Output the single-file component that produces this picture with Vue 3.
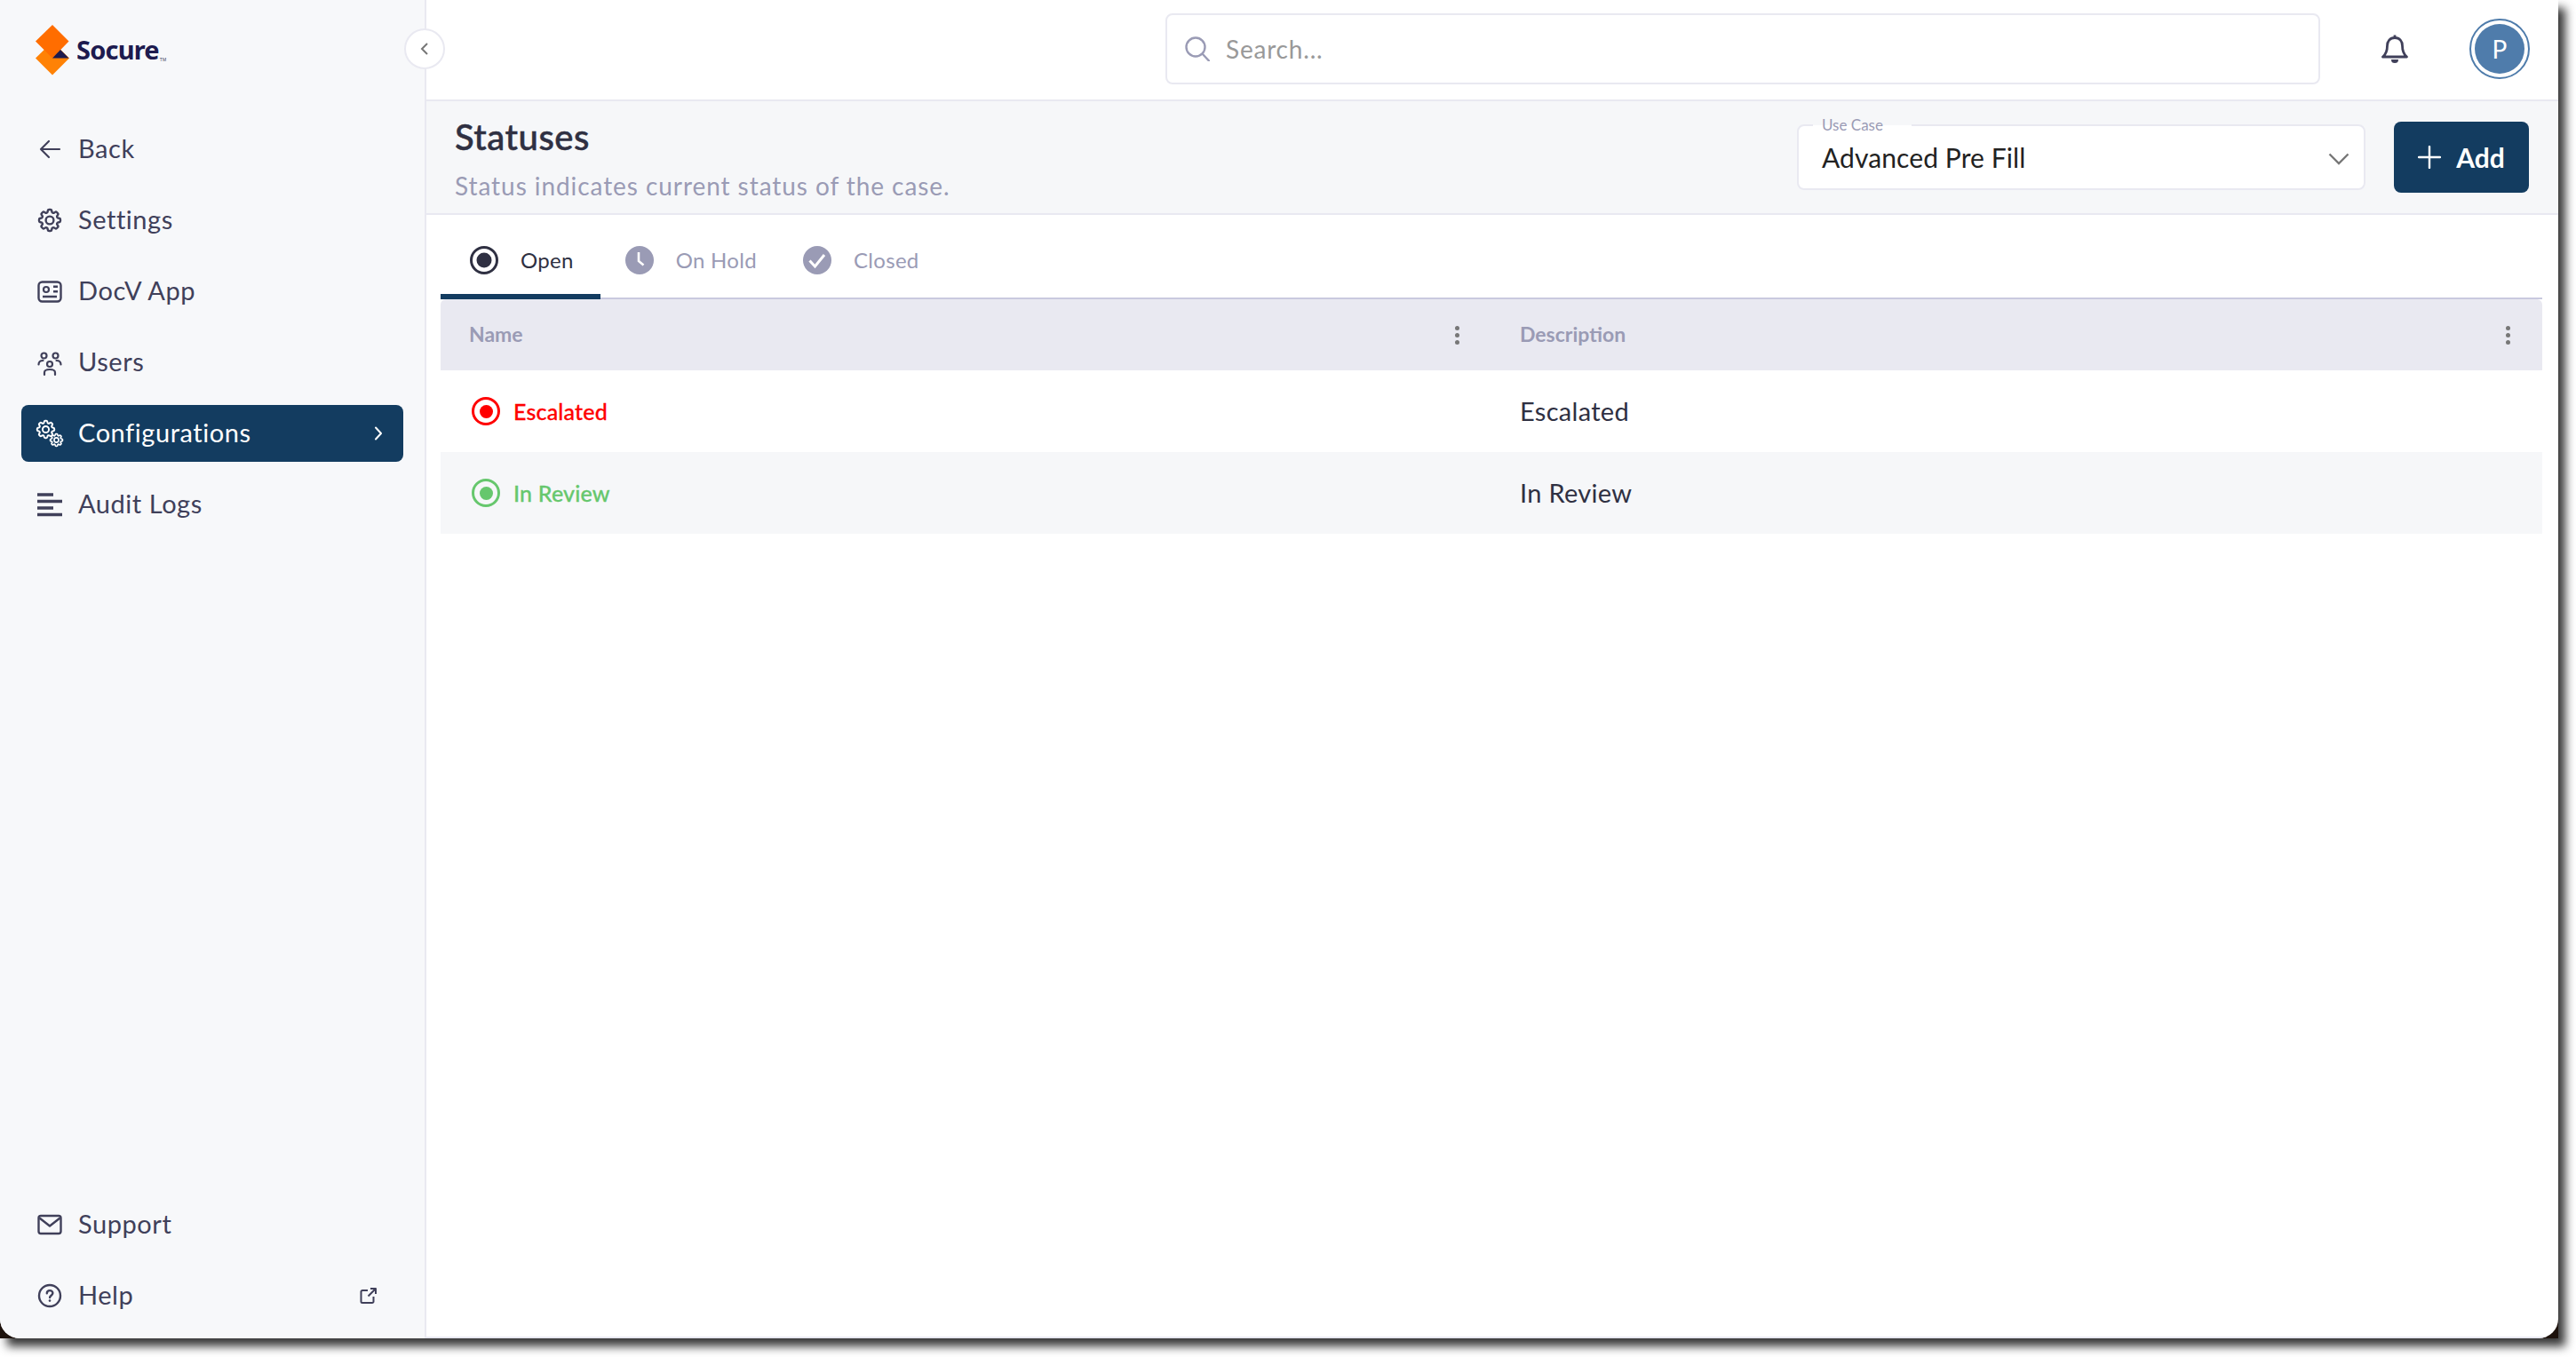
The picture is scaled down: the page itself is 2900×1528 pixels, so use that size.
<script setup>
import { ref } from "vue";

const mainNav = [
  { label: "Back", icon: "back" },
  { label: "Settings", icon: "gear" },
  { label: "DocV App", icon: "card" },
  { label: "Users", icon: "users" },
  { label: "Configurations", icon: "gears", active: true },
  { label: "Audit Logs", icon: "logs" },
];

const activeTab = ref("Open");
const tabs = ["Open", "On Hold", "Closed"];

const rows = [
  { name: "Escalated", description: "Escalated", tone: "red" },
  { name: "In Review", description: "In Review", tone: "green" },
];

const gearPath =
  "M10.343 3.94c.09-.542.56-.94 1.11-.94h1.093c.55 0 1.02.398 1.11.94l.149.894c.07.424.384.764.78.93.398.164.855.142 1.205-.108l.737-.527a1.125 1.125 0 0 1 1.45.12l.773.774c.39.389.44 1.002.12 1.45l-.527.737c-.25.35-.272.806-.107 1.204.165.397.505.71.93.78l.893.15c.543.09.94.559.94 1.109v1.094c0 .55-.397 1.02-.94 1.11l-.894.149c-.424.07-.764.383-.929.78-.165.398-.143.854.107 1.204l.527.738c.32.447.269 1.06-.12 1.45l-.774.773a1.125 1.125 0 0 1-1.449.12l-.738-.527c-.35-.25-.806-.272-1.203-.107-.398.165-.71.505-.781.929l-.149.894c-.09.542-.56.94-1.11.94h-1.094c-.55 0-1.019-.398-1.11-.94l-.148-.894c-.071-.424-.384-.764-.781-.93-.398-.164-.854-.142-1.204.108l-.738.527c-.447.32-1.06.269-1.45-.12l-.773-.774a1.125 1.125 0 0 1-.12-1.45l.527-.737c.25-.35.272-.806.108-1.204-.165-.397-.506-.71-.93-.78l-.894-.15c-.542-.09-.94-.56-.94-1.109v-1.094c0-.55.398-1.02.94-1.11l.894-.149c.424-.07.765-.383.93-.78.165-.398.143-.854-.108-1.204l-.526-.738a1.125 1.125 0 0 1 .12-1.45l.773-.773a1.125 1.125 0 0 1 1.45-.12l.737.527c.35.25.807.272 1.204.107.397-.165.71-.505.78-.929l.15-.894Z";
</script>

<template>
  <div class="page">
    <div class="window">
      <div class="app">
        <aside class="sidebar">
          <div class="logo">
            <svg class="logo-mark" viewBox="0 0 38 57" width="38" height="57">
              <path d="M19 19 38 37.5 19 56.5 0 37.5z" fill="#ff8205" />
              <path d="M19 0 37.5 18.5 19 37.5 0 18.5z" fill="#ff6d00" />
              <path d="M28 28 37.5 37.5H19z" fill="#1d1b4f" />
            </svg>
            <span class="logo-text">Socure</span>
            <span class="logo-tm">TM</span>
          </div>

          <nav class="nav">
            <a
              v-for="item in mainNav"
              :key="item.label"
              class="nav-item"
              :class="{ active: item.active }"
            >
              <svg class="nav-icon" viewBox="0 0 28 28" fill="none" stroke="currentColor" stroke-width="2.2">
                <template v-if="item.icon === 'back'">
                  <path d="M25 14H4M13 5l-9 9 9 9" stroke-linecap="round" stroke-linejoin="round" />
                </template>
                <g v-else-if="item.icon === 'gear'" transform="translate(14 14) scale(1.33) translate(-12 -12)" stroke-width="1.8">
                  <path :d="gearPath" />
                  <circle cx="12" cy="12" r="3.300" />
                </g>
                <template v-else-if="item.icon === 'card'">
                  <rect x="1.500" y="3.500" width="25" height="22" rx="4" stroke-width="2.400" />
                  <circle cx="10" cy="12" r="3" />
                  <path d="M18 8.700h5M18 14.300h5M6 20h16" stroke-width="2.400" />
                </template>
                <template v-else-if="item.icon === 'users'">
                  <circle cx="7.500" cy="6.500" r="3" />
                  <circle cx="20.500" cy="6.500" r="3" />
                  <circle cx="14" cy="16" r="3" />
                  <path d="M1.500 16.500c0-3 1.500-4.500 5-4.500M26.500 16.500c0-3-1.500-4.500-5-4.500M8 28v-2.500c0-2.500 2-3.500 6-3.500s6 1 6 3.500V28" stroke-linecap="round" />
                </template>
                <template v-else-if="item.icon === 'gears'">
                  <g transform="translate(9.500 9.500) scale(1.08) translate(-12 -12)" stroke-width="1.800">
                    <path :d="gearPath" />
                    <circle cx="12" cy="12" r="3.300" />
                  </g>
                  <g transform="translate(21.500 21.500) scale(.77) translate(-12 -12)" stroke-width="2.200">
                    <path :d="gearPath" />
                    <circle cx="12" cy="12" r="3.300" />
                  </g>
                </template>
                <template v-else>
                  <path d="M0 3h18M0 10.500h28M0 18h18M0 25.500h28" stroke-width="3.600" />
                </template>
              </svg>
              <span class="nav-label">{{ item.label }}</span>
              <svg v-if="item.active" class="nav-arrow" viewBox="0 0 12 16" fill="none" stroke="currentColor" stroke-width="2">
                <path d="M3 1.500l6 6.500-6 6.500" stroke-linecap="round" stroke-linejoin="round" />
              </svg>
            </a>
          </nav>

          <nav class="nav nav-bottom">
            <a class="nav-item">
              <svg class="nav-icon" viewBox="0 0 28 28" fill="none" stroke="currentColor" stroke-width="2.400">
                <rect x="1.500" y="4" width="25" height="20" rx="2.500" />
                <path d="M2.500 6.500 14 15.500 25.500 6.500" stroke-linejoin="round" />
              </svg>
              <span class="nav-label">Support</span>
            </a>
            <a class="nav-item">
              <svg class="nav-icon" viewBox="0 0 28 28" fill="none" stroke="currentColor" stroke-width="2.400">
                <circle cx="14" cy="14" r="12" />
                <path d="M10.800 11.300c0-4.200 6.600-4.200 6.600-.2 0 2.600-3.300 2.600-3.300 5" stroke-linecap="round" />
                <circle cx="14" cy="19.600" r="1.300" fill="currentColor" stroke="none" />
              </svg>
              <span class="nav-label">Help</span>
              <svg class="nav-external" viewBox="0 0 20 20" fill="none" stroke="currentColor" stroke-width="2">
                <path d="M9 4H3a1.500 1.500 0 0 0-1.500 1.500v11A1.500 1.500 0 0 0 3 18h11a1.500 1.500 0 0 0 1.500-1.500V11M9.500 10.500 18 2M12 2h6v6" stroke-linejoin="round" />
              </svg>
            </a>
          </nav>

          <button class="collapse-btn">
            <svg viewBox="0 0 12 16" width="12" height="16" fill="none" stroke="#777" stroke-width="2">
              <path d="M9 2 3 8l6 6" />
            </svg>
          </button>
        </aside>

        <div class="content">
          <header class="topbar">
            <div class="search">
              <svg class="search-icon" viewBox="0 0 28 28" width="28" height="28" fill="none" stroke="#9a9bb5" stroke-width="2.400">
                <circle cx="12" cy="12" r="10.500" />
                <path d="M20 20l7 7.500" stroke-linecap="round" />
              </svg>
              <span class="search-text">Search...</span>
            </div>
            <svg class="bell" viewBox="0 0 30 34" width="30" height="34" fill="none" stroke="#40405a" stroke-width="2.800">
              <path d="M15 1.500v3M15 4.500c-5.500 0-8.500 4-8.500 9 0 7-2 10-5 12.500h27c-3-2.500-5-5.500-5-12.500 0-5-3-9-8.500-9z" stroke-linejoin="round" />
              <path d="M11 29h8c0 3-1.500 4-4 4s-4-1-4-4z" fill="#40405a" stroke="none" />
            </svg>
            <div class="avatar"><span class="avatar-inner">P</span></div>
          </header>

          <section class="subheader">
            <div class="heading">
              <h1 class="title">Statuses</h1>
              <p class="subtitle">Status indicates current status of the case.</p>
            </div>
            <div class="select">
              <span class="select-label">Use Case</span>
              <span class="select-value">Advanced Pre Fill</span>
              <svg class="select-arrow" viewBox="0 0 24 14" width="24" height="14" fill="none" stroke="#777" stroke-width="2.400">
                <path d="M1.500 1.500 12 12 22.500 1.500" />
              </svg>
            </div>
            <button class="add-btn">
              <svg viewBox="0 0 26 26" width="26" height="26" stroke="#fff" stroke-width="2.400">
                <path d="M13 1v24M1 13h24" stroke-linecap="round" />
              </svg>
              <span>Add</span>
            </button>
          </section>

          <section class="panel">
            <div class="tabs">
              <button
                v-for="tab in tabs"
                :key="tab"
                class="tab"
                :class="{ active: activeTab === tab }"
                @click="activeTab = tab"
              >
                <svg class="tab-icon" viewBox="0 0 32 32" width="32" height="32">
                  <template v-if="tab === 'Open'">
                    <circle cx="16" cy="16" r="14.500" fill="none" stroke="#2f3042" stroke-width="3" />
                    <circle cx="16" cy="16" r="8.500" fill="#2f3042" />
                  </template>
                  <template v-else-if="tab === 'On Hold'">
                    <circle cx="16" cy="16" r="16" fill="#9a9bb5" />
                    <path d="M15 7v10l5.500 4.500" fill="none" stroke="#fff" stroke-width="2.600" />
                  </template>
                  <template v-else>
                    <circle cx="16" cy="16" r="16" fill="#9a9bb5" />
                    <path d="M7.500 16.500 13.500 23 24 10" fill="none" stroke="#fff" stroke-width="3" />
                  </template>
                </svg>
                <span>{{ tab }}</span>
              </button>
            </div>

            <div class="table">
              <div class="table-head">
                <div class="cell">
                  <span>Name</span>
                  <span class="kebab"><i></i><i></i><i></i></span>
                </div>
                <div class="cell">
                  <span>Description</span>
                  <span class="kebab"><i></i><i></i><i></i></span>
                </div>
              </div>
              <div v-for="row in rows" :key="row.name" class="table-row">
                <div class="cell status" :class="row.tone">
                  <span class="status-dot"><i></i></span>
                  <span class="status-name">{{ row.name }}</span>
                </div>
                <div class="cell desc"><span>{{ row.description }}</span></div>
              </div>
            </div>
          </section>
        </div>
      </div>
    </div>
  </div>
</template>

<style scoped>
.page {
  width: 2900px;
  height: 1528px;
  overflow: hidden;
  background: #fff;
}
.window {
  width: 2880px;
  height: 1507px;
  background: #1d120c;
  box-shadow: 8px 9px 10px rgba(0, 0, 0, 0.78);
  font-family: Lato, "Noto Sans", sans-serif;
  color: #40405a;
}
.app {
  height: 100%;
  display: flex;
  background: #fff;
  border-radius: 0 0 22px 22px;
  overflow: hidden;
}

.sidebar {
  position: relative;
  width: 480px;
  flex: none;
  box-sizing: border-box;
  display: flex;
  flex-direction: column;
  background: #f7f8fa;
  border-right: 2px solid #e9e9f1;
  padding: 28px 24px 16px;
  z-index: 1;
}
.logo {
  display: flex;
  align-items: center;
  height: 57px;
  padding-left: 16px;
}
.logo-mark {
  flex: none;
}
.logo-text {
  margin-left: 8px;
  padding-bottom: 3px;
  font-family: "Noto Sans", sans-serif;
  font-size: 29px;
  font-weight: 700;
  letter-spacing: -0.8px;
  color: #1d1b4f;
}
.logo-tm {
  font-family: "Liberation Sans", sans-serif;
  font-size: 5px;
  margin: 20px 0 0 1px;
  color: #40405a;
}

.nav {
  display: flex;
  flex-direction: column;
  gap: 16px;
  margin-top: 51px;
}
.nav-bottom {
  margin-top: auto;
}
.nav-item {
  display: flex;
  align-items: center;
  height: 64px;
  padding: 0 26px 0 18px;
  border-radius: 8px;
  font-size: 29px;
  color: #40405a;
}
.nav-item.active {
  background: #133c60;
  color: #fff;
}
.nav-icon {
  width: 28px;
  height: 28px;
  flex: none;
  overflow: visible;
}
.nav-label {
  margin-left: 18px;
  padding-bottom: 3px;
  flex: 1;
  letter-spacing: 0.55px;
}
.nav-arrow {
  width: 12px;
  height: 16px;
  margin-right: -4px;
}
.nav-external {
  width: 20px;
  height: 20px;
  margin-right: 3px;
}
.collapse-btn {
  position: absolute;
  top: 32px;
  right: -23px;
  width: 46px;
  height: 46px;
  padding: 0;
  display: flex;
  align-items: center;
  justify-content: center;
  background: #fff;
  border: 2px solid #e9e9f1;
  border-radius: 50%;
}

.content {
  flex: 1;
  min-width: 0;
  display: flex;
  flex-direction: column;
  box-sizing: border-box;
  border-bottom: 2px solid #e9e9f1;
}
.topbar {
  height: 114px;
  flex: none;
  box-sizing: border-box;
  display: flex;
  align-items: center;
  border-bottom: 2px solid #e9e9f1;
  padding: 0 32px 2px 832px;
}
.search {
  width: 1300px;
  height: 80px;
  box-sizing: border-box;
  display: flex;
  align-items: center;
  gap: 18px;
  padding: 0 20px;
  border: 2px solid #e9e9f1;
  border-radius: 8px;
}
.search-text {
  font-size: 28px;
  color: #999;
  letter-spacing: 0.8px;
}
.bell {
  margin-left: 69px;
}
.avatar {
  margin-left: 69px;
  width: 68px;
  height: 68px;
  box-sizing: border-box;
  border: 2px solid #4f7cab;
  border-radius: 50%;
  padding: 4px;
}
.avatar-inner {
  display: flex;
  align-items: center;
  justify-content: center;
  height: 100%;
  border-radius: 50%;
  background: #4f7cab;
  color: #fff;
  font-size: 28px;
}

.subheader {
  height: 128px;
  flex: none;
  box-sizing: border-box;
  display: flex;
  align-items: center;
  background: #f6f7f9;
  border-bottom: 2px solid #e9e9f1;
  padding: 0 33px 0 32px;
}
.heading {
  flex: 1;
  padding-top: 2px;
}
.title {
  margin: 0;
  font-size: 40px;
  font-weight: 500;
  letter-spacing: 0.5px;
  -webkit-text-stroke: 0.5px #2f3042;
  color: #2f3042;
  line-height: 46px;
}
.subtitle {
  margin: 15px 0 0;
  font-size: 28px;
  color: #9a9bb5;
  line-height: 34px;
  letter-spacing: 0.93px;
}
.select {
  position: relative;
  width: 640px;
  height: 74px;
  box-sizing: border-box;
  display: flex;
  align-items: center;
  justify-content: space-between;
  padding: 0 16px 0 26px;
  background: #fff;
  border: 2px solid #e9e9f1;
  border-radius: 8px;
}
.select-label {
  position: absolute;
  left: 16px;
  top: -10px;
  padding: 0 32px 0 10px;
  background: linear-gradient(#f6f7f9 50%, #fff 50%);
  font-size: 17px;
  line-height: 18px;
  color: #9a9bb5;
}
.select-value {
  font-size: 30px;
  color: #222;
  letter-spacing: 0.1px;
}
.select-arrow {
  margin-top: 4px;
}
.add-btn {
  margin-left: 32px;
  width: 152px;
  height: 80px;
  display: flex;
  align-items: center;
  justify-content: center;
  gap: 17px;
  background: #133c60;
  border: none;
  border-radius: 8px;
  color: #fff;
  font-family: inherit;
  font-size: 30px;
  font-weight: 700;
}

.panel {
  padding: 0 18px 0 16px;
}
.tabs {
  height: 95px;
  box-sizing: border-box;
  display: flex;
  border-bottom: 2px solid #c9c9df;
}
.tab {
  height: 95px;
  box-sizing: border-box;
  display: flex;
  align-items: center;
  gap: 25px;
  padding: 12px 24px 0 28px;
  background: none;
  border: none;
  border-bottom: 6px solid transparent;
  font-family: inherit;
  font-size: 24px;
  letter-spacing: 0.3px;
  color: #9a9bb5;
}
.tab:first-child {
  padding-left: 33px;
  padding-right: 30px;
}
.tab.active {
  color: #2f3042;
  border-bottom-color: #133c60;
}
.tab-icon {
  flex: none;
}

.table-head,
.table-row {
  display: grid;
  grid-template-columns: 1183px 1fr;
}
.table-head {
  height: 80px;
  background: #e9e9f1;
  border-radius: 6px 6px 0 0;
  font-size: 23px;
  font-weight: 700;
  color: #9a9bb5;
}
.table-head span:first-child {
  padding-bottom: 2px;
}
.table-row {
  height: 92px;
}
.table-row:nth-child(odd) {
  background: #f6f7f9;
}
.cell {
  display: flex;
  align-items: center;
  justify-content: space-between;
  padding: 0 36px 0 32px;
}
.kebab {
  display: flex;
  flex-direction: column;
  gap: 3px;
}
.kebab i {
  width: 5px;
  height: 5px;
  border-radius: 50%;
  background: #777;
}
.status {
  justify-content: flex-start;
  gap: 15px;
  padding-left: 35px;
  font-size: 25px;
  font-weight: 500;
  letter-spacing: 0.2px;
}
.status-name {
  -webkit-text-stroke: 0.3px currentColor;
}
.status-dot {
  width: 32px;
  height: 32px;
  box-sizing: border-box;
  display: flex;
  align-items: center;
  justify-content: center;
  border: 3px solid currentColor;
  border-radius: 50%;
}
.status-dot i {
  width: 15px;
  height: 15px;
  border-radius: 50%;
  background: currentColor;
}
.status.red {
  color: #ff0000;
}
.status.green {
  color: #66c76d;
}
.desc {
  font-size: 29px;
  color: #2f3042;
  letter-spacing: 0.3px;
}
.desc span {
  padding-bottom: 2px;
}
</style>
